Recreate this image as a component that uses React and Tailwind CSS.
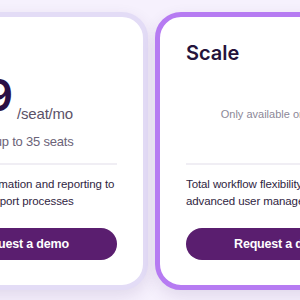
import React from 'react'

const body = { fontFamily: '"Liberation Sans", Arial, sans-serif' }
const head = { fontFamily: 'Inter, "Liberation Sans", sans-serif' }

const PlanCard = ({ name, highlight, center, children, desc1, desc2, sub }) => {
  return (
    <div
      className={`w-[252px] h-[278px] shrink-0 rounded-[26px] border-[5px] bg-white px-[26px] flex flex-col shadow-[0_6px_16px_rgba(70,40,110,0.12)] ${
        highlight ? 'border-[#b67bf2]' : 'border-[#e3dcf6]'
      }`}
    >
      <h2 className="mt-[24px] h-[24px] text-[20px] leading-[24px] font-semibold text-[#25133b]" style={head}>
        {name}
      </h2>
      <div className={`mt-[8px] h-[44px] flex items-end ${center ? 'justify-center' : 'justify-start'}`}>{children}</div>
      <p className="mt-[17px] h-[16px] text-[13px] leading-[16px] text-[#6b6378] tracking-[-0.2px] whitespace-nowrap" style={body}>
        {sub}
      </p>
      <div className="mt-[13px] h-[2px] bg-[#f0eef4]" />
      <p className="mt-[11px] text-[11.5px] leading-[17px] text-[#2f2542] tracking-[-0.1px] whitespace-nowrap" style={body}>
        {desc1}
        <br />
        {desc2}
      </p>
      <button
        className="mt-[18px] h-[32px] w-full shrink-0 rounded-full bg-[#5a1e6f] text-white text-[12.5px] font-bold tracking-[-0.2px]"
        style={body}
      >
        Request a demo
      </button>
    </div>
  )
}

const App = () => {
  return (
    <div className="w-[300px] h-[300px] overflow-hidden bg-[#f6f1fd]">
      <div className="flex gap-[7px] ml-[-104px] pt-[12px]">
        <PlanCard
          name="Pro"
          sub="For team of up to 35 seats"
          desc1="Workflow automation and reporting to"
          desc2="scale your support processes"
        >
          <span className="text-[44px] leading-[44px] font-semibold text-[#2a0f44]" style={head}>
            $49
          </span>
          <span className="ml-[4px] mb-[-6px] text-[15px] leading-[18px] text-[#5b5168] tracking-[-0.2px]" style={body}>
            /seat/mo
          </span>
        </PlanCard>
        <PlanCard
          name="Scale"
          highlight
          center
          sub={'\u00a0'}
          desc1="Total workflow flexibility with"
          desc2="advanced user management"
        >
          <span className="mb-[-5px] text-[11px] leading-[16px] text-[#8c8898] whitespace-nowrap" style={body}>
            Only available on annual
          </span>
        </PlanCard>
      </div>
    </div>
  )
}

export default App
